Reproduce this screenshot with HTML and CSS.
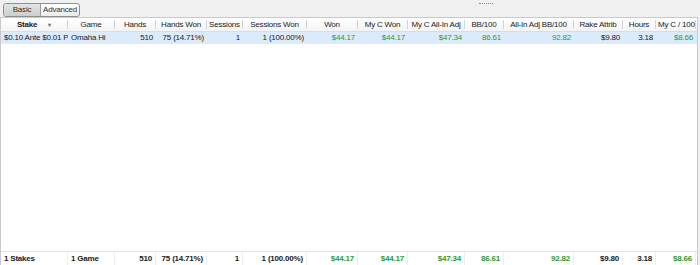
FILE: index.html
```html
<!DOCTYPE html>
<html lang="en">
<head>
  <meta charset="UTF-8">
  <title>Stakes Report</title>
  <link rel="stylesheet" href="styles.css">
</head>
<body>
  <div class="toolbar">
    <div class="tabs">
      <span class="tab active">Basic</span>
      <span class="tab">Advanced</span>
    </div>
    <div class="grip"></div>
  </div>

  <div class="grid">
    <div class="row head">
      <div class="c center">Stake <span class="sort">&#9662;</span></div>
      <div class="c center">Game</div>
      <div class="c center">Hands</div>
      <div class="c center">Hands Won</div>
      <div class="c center">Sessions</div>
      <div class="c center">Sessions Won</div>
      <div class="c center">Won</div>
      <div class="c center">My C Won</div>
      <div class="c center">My C All-In Adj</div>
      <div class="c center">BB/100</div>
      <div class="c center">All-In Adj BB/100</div>
      <div class="c center">Rake Attrib</div>
      <div class="c center">Hours</div>
      <div class="c center">My C / 100</div>
    </div>

    <div class="row data selected">
      <div class="c clip">$0.10 Ante $0.01 PL Hi</div>
      <div class="c">Omaha Hi</div>
      <div class="c num">510</div>
      <div class="c num">75 (14.71%)</div>
      <div class="c num">1</div>
      <div class="c num">1 (100.00%)</div>
      <div class="c num green">$44.17</div>
      <div class="c num green">$44.17</div>
      <div class="c num green">$47.34</div>
      <div class="c num green">86.61</div>
      <div class="c num green">92.82</div>
      <div class="c num">$9.80</div>
      <div class="c num">3.18</div>
      <div class="c num green">$8.66</div>
    </div>

    <div class="filler"></div>

    <div class="row total">
      <div class="c">1 Stakes</div>
      <div class="c">1 Game</div>
      <div class="c num">510</div>
      <div class="c num">75 (14.71%)</div>
      <div class="c num">1</div>
      <div class="c num">1 (100.00%)</div>
      <div class="c num green">$44.17</div>
      <div class="c num green">$44.17</div>
      <div class="c num green">$47.34</div>
      <div class="c num green">86.61</div>
      <div class="c num green">92.82</div>
      <div class="c num">$9.80</div>
      <div class="c num">3.18</div>
      <div class="c num green">$8.66</div>
    </div>
  </div>
</body>
</html>
```

FILE: styles.css
```css
html, body { margin: 0; height: 100%; }
body { font-family: "Liberation Sans", Arial, sans-serif; font-size: 8px; letter-spacing: -0.2px; color: #1a1a1a; background: #f0f0f0; display: flex; flex-direction: column; width: 700px; height: 265px; overflow: hidden; }

.toolbar { height: 17px; position: relative; flex: none; }
.tabs { display: flex; margin: 3px 0 0 3px; width: 77px; height: 14px; border: 1px solid #8e8f8f; border-radius: 3px; overflow: hidden; box-sizing: border-box; background: linear-gradient(#ffffff, #ececec); }
.tab { flex: 1; text-align: center; line-height: 12px; color: #333; }
.tab + .tab { border-left: 1px solid #9a9a9a; }
.tab.active { background: linear-gradient(#e4e4e4, #cdcdcd); flex: 0 0 36px; }
.grip { position: absolute; left: 479px; top: 3px; width: 14px; border-top: 1px dotted #8a8a8a; }

.grid { flex: 1; display: flex; flex-direction: column; background: #fff; border: 1px solid #c9c9c9; border-bottom: none; margin-right: 2px; }
.row { display: grid; grid-template-columns: 67px 47px 41px 51px 36px 64px 51px 50px 57px 39px 70px 49px 33px 40px; }
.c { padding: 0 3px; white-space: nowrap; overflow: hidden; }
.clip { padding-right: 1px; }
.num { text-align: right; }
.center { text-align: center; }
.green { color: #2f9a2f; }

.head { height: 14px; background: linear-gradient(#ffffff, #f3f4f6); border-bottom: 1px solid #dcdcdc; box-sizing: border-box; }
.head .c { border-right: 1px solid #d4d4d4; margin: 2px 0; line-height: 10px; padding: 0 2px; }
.head .c:first-child { font-weight: bold; }
.sort { color: #777; font-size: 6px; margin-left: 9px; }

.data { height: 12px; line-height: 12px; }
.selected { background: #dcebfb; }

.filler { flex: 1; }

.total { height: 14px; line-height: 14px; font-weight: bold; border-top: 1px solid #e2e2e2; box-sizing: border-box; }
.total .c { border-right: 1px solid #eeeeee; }
```
